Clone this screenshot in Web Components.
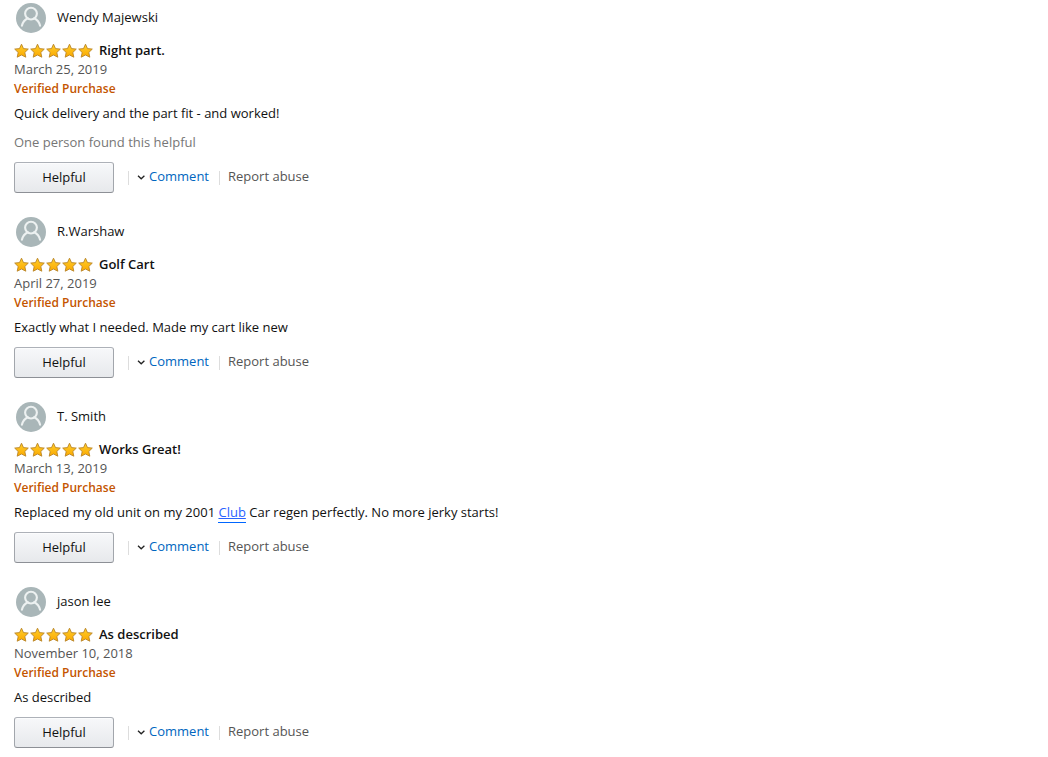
<!DOCTYPE html>
<html lang="en">
<head>
<meta charset="utf-8">
<title>Customer reviews</title>
<style>
body { margin: 0; background: #fff; color: #111; font: 13px/19px "Open Sans", "Noto Sans", sans-serif; }
.keyword { color: #2962ff; text-decoration: underline; text-underline-offset: 1px; border-bottom: 1px solid #0066ff; padding-bottom: 1px; }
</style>
</head>
<body>
<review-list>
  <customer-review author="Wendy Majewski" heading="Right part." date="March 25, 2019" votes="One person found this helpful">Quick delivery and the part fit - and worked!</customer-review>
  <customer-review author="R.Warshaw" heading="Golf Cart" date="April 27, 2019">Exactly what I needed. Made my cart like new</customer-review>
  <customer-review author="T. Smith" heading="Works Great!" date="March 13, 2019">Replaced my old unit on my 2001 <a class="keyword" href="#club">Club</a> Car regen perfectly. No more jerky starts!</customer-review>
  <customer-review author="jason lee" heading="As described" date="November 10, 2018">As described</customer-review>
</review-list>
<script>
class BaseElement extends HTMLElement {
  render(html) { this.attachShadow({ mode: 'open' }).innerHTML = html; }
}

customElements.define('review-list', class extends BaseElement {
  connectedCallback() {
    this.render(`<style>
      :host { display: flex; flex-direction: column; gap: 24px; padding: 3px 14px 8px; }
    </style><slot></slot>`);
  }
});

customElements.define('user-avatar', class extends BaseElement {
  connectedCallback() {
    this.render(`<style>
      :host { display: block; width: 30px; height: 30px; }
      svg { display: block; }
    </style>
    <svg width="30" height="30" viewBox="0 0 30 30" aria-hidden="true">
      <circle cx="15" cy="15" r="15" fill="#a9b6b8"/>
      <g fill="none" stroke="#edf1f1" stroke-width="2.1" stroke-linecap="round">
        <circle cx="15" cy="10.6" r="5.9"/>
        <path d="M5.9 22.8C6.7 19.3 8.7 16.6 11.7 15.2M18.3 15.2C21.3 16.6 23.3 19.3 24.1 22.8"/>
      </g>
    </svg>`);
  }
});

customElements.define('star-rating', class extends BaseElement {
  connectedCallback() {
    const star = `<svg width="16" height="16" viewBox="0 0 16 16" aria-hidden="true">
      <path d="M7.5 1.2L9.5 5.6L14.3 6.1L10.8 9.5L11.8 14.2L7.5 12L3.2 14.2L4.2 9.5L.7 6.1L5.5 5.6Z" fill="url(#gold)" stroke="#b98428" stroke-width=".9" stroke-linejoin="round"/>
    </svg>`;
    this.setAttribute('role', 'img');
    this.setAttribute('aria-label', '5 out of 5 stars');
    this.render(`<style>
      :host { display: flex; height: 16px; }
      svg { display: block; }
      .defs { position: absolute; }
    </style>
    <svg class="defs" width="0" height="0"><linearGradient id="gold" x1="0" y1="0" x2="0" y2="1"><stop stop-color="#ffce2b"/><stop offset="1" stop-color="#fba900"/></linearGradient></svg>
    ${star.repeat(5)}`);
  }
});

customElements.define('review-actions', class extends BaseElement {
  connectedCallback() {
    this.render(`<style>
      :host { display: flex; align-items: center; }
      button { box-sizing: border-box; width: 100px; height: 31px; padding: 0; margin-right: 14px; font: inherit; color: #111;
        background: linear-gradient(#f7f8fa, #e7e9ec); border: 1px solid; border-color: #adb1b8 #a2a6ac #8d9096; border-radius: 3px;
        box-shadow: inset 0 1px 0 rgba(255,255,255,.6); }
      .item { display: flex; align-items: center; height: 14px; border-left: 1px solid #ddd; padding: 0 10px 0 8px; }
      a { display: flex; align-items: center; gap: 4px; color: #555; text-decoration: none; margin-top: -2px; }
      .comment { color: #0066c0; }
      svg { display: block; margin-top: 2px; }
    </style>
    <button type="button">Helpful</button>
    <span class="item"><a class="comment" href="#comment"><svg width="8" height="5" viewBox="0 0 8 5" aria-hidden="true"><path d="M1 .8L4.2 3.8L7.4 .8" fill="none" stroke="#222" stroke-width="1.3"/></svg>Comment</a></span>
    <span class="item"><a href="#report">Report abuse</a></span>`);
  }
});

customElements.define('customer-review', class extends BaseElement {
  connectedCallback() {
    const get = name => this.getAttribute(name);
    this.render(`<style>
      :host { display: block; }
      .profile { display: flex; align-items: center; gap: 11px; margin: 0 0 8px 2px; }
      .profile span { padding-bottom: 2px; }
      .title { display: flex; align-items: center; gap: 5px; }
      h3 { margin: 0; font-size: 13px; font-weight: 600; line-height: 19px; }
      .date { color: #555; }
      .verified { color: #c45500; font-size: 12px; font-weight: 600; }
      p { margin: 6px 0 10px; }
      .votes { color: #767676; margin-top: 10px; }
    </style>
    <div class="profile"><user-avatar></user-avatar><span>${get('author')}</span></div>
    <div class="title"><star-rating></star-rating><h3>${get('heading')}</h3></div>
    <div class="date">${get('date')}</div>
    <div class="verified">Verified Purchase</div>
    <p><slot></slot></p>
    ${get('votes') ? `<p class="votes">${get('votes')}</p>` : ''}
    <review-actions></review-actions>`);
  }
});
</script>
</body>
</html>
